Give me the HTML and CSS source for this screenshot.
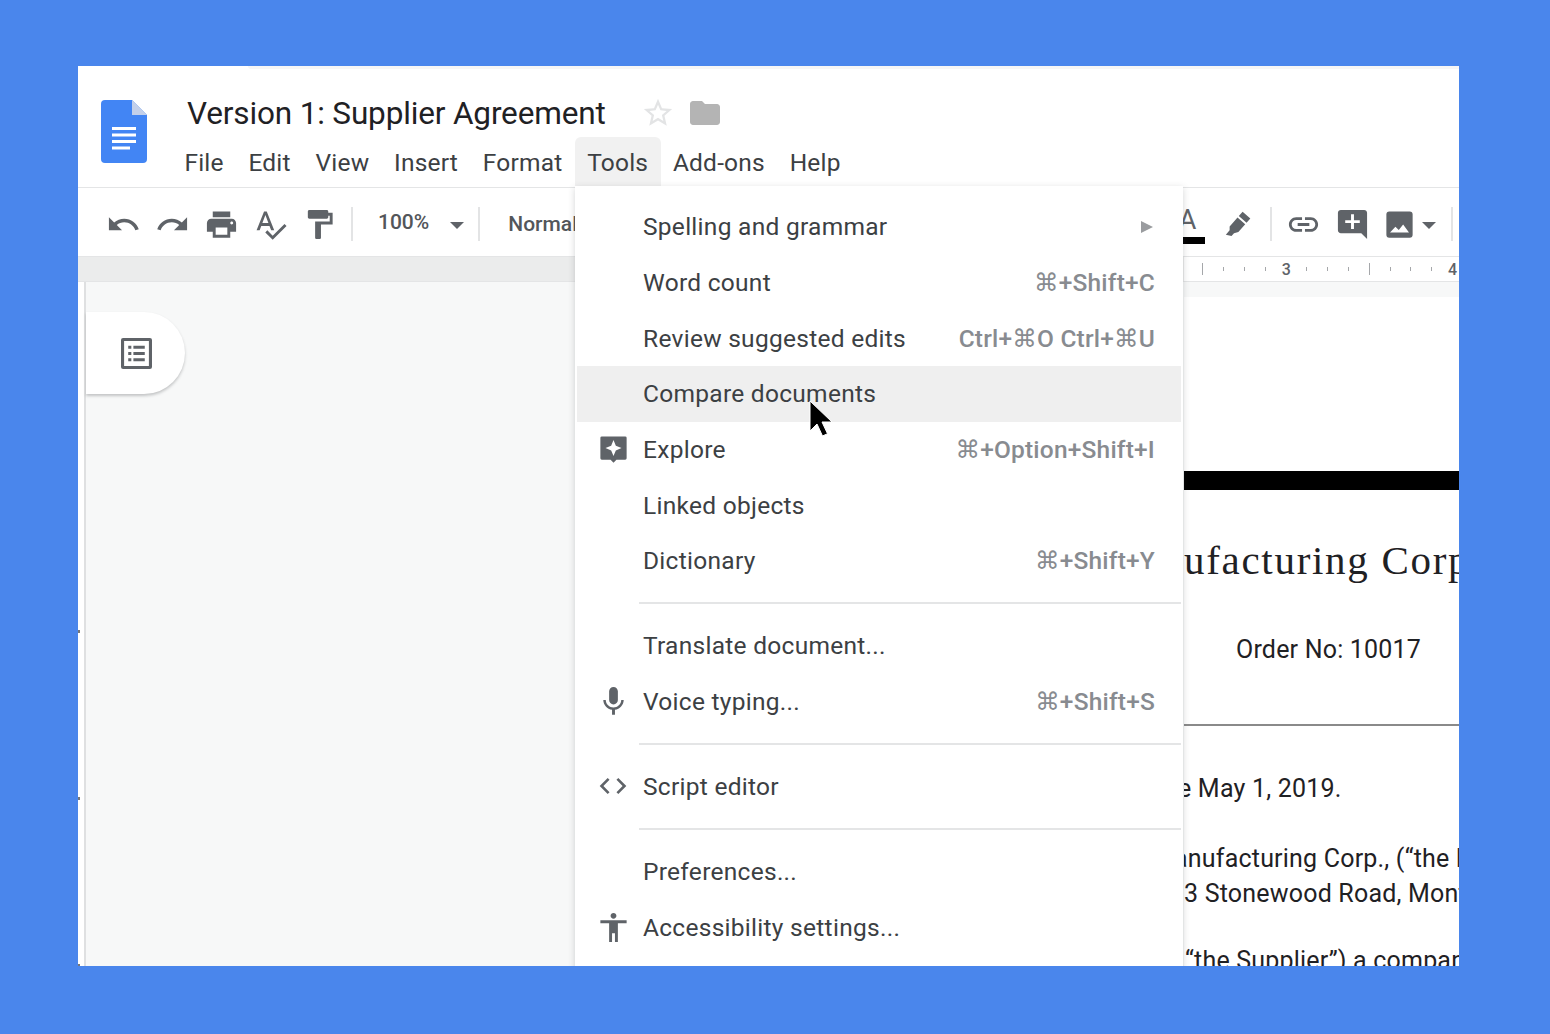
FILE: index.html
```html
<!DOCTYPE html>
<html lang="en">
<head>
    <meta charset="UTF-8">
    <title>Version 1: Supplier Agreement</title>
    <link rel="stylesheet" href="styles.css">
</head>
<body>
    <div class="window">
        <div class="top-strip"></div>
        <header class="doc-header">
            <svg class="doc-logo" viewBox="0 0 46 63">
                <path fill="#4285f4" d="M4 0h27l15 15v44a4 4 0 0 1-4 4H4a4 4 0 0 1-4-4V4a4 4 0 0 1 4-4z"/>
                <path fill="#c3d0ea" d="M31 0l15 15H31z"/>
                <path fill="#fff" d="M11 27h24v3H11zM11 33.500h24v3H11zM11 40h24v3H11zM11 46.500h18v3H11z"/>
            </svg>
            <div class="header-main">
                <div class="title-row">
                    <span class="doc-title">Version 1: Supplier Agreement</span>
                    <svg class="star-icon" viewBox="0 0 24 24"><path d="M22 9.240l-7.190-.62L12 2 9.190 8.630 2 9.240l5.460 4.730L5.820 21 12 17.270 18.180 21l-1.630-7.030L22 9.240zM12 15.400l-3.760 2.270 1-4.280-3.320-2.880 4.380-.38L12 6.100l1.710 4.040 4.380.38-3.320 2.880 1 4.280L12 15.400z"/></svg>
                    <svg class="folder-icon" viewBox="0 0 24 24"><path d="M10 4H4c-1.100 0-2 .9-2 2v12c0 1.100.9 2 2 2h16c1.100 0 2-.9 2-2V8c0-1.100-.9-2-2-2h-8l-2-2z"/></svg>
                </div>
                <nav class="menu-bar">
                    <span class="menu-item">File</span>
                    <span class="menu-item">Edit</span>
                    <span class="menu-item">View</span>
                    <span class="menu-item">Insert</span>
                    <span class="menu-item">Format</span>
                    <span class="menu-item active">Tools</span>
                    <span class="menu-item">Add-ons</span>
                    <span class="menu-item">Help</span>
                </nav>
            </div>
        </header>

        <div class="toolbar">
            <span class="tool"><svg viewBox="0 0 24 24"><path d="M12.500 8c-2.650 0-5.050.99-6.900 2.600L2 7v9h9l-3.620-3.620c1.390-1.160 3.160-1.880 5.120-1.880 3.540 0 6.550 2.310 7.600 5.500l2.370-.78C21.080 11.030 17.150 8 12.500 8z"/></svg></span>
            <span class="tool"><svg viewBox="0 0 24 24"><path d="M18.400 10.600C16.550 8.990 14.150 8 11.500 8c-4.650 0-8.580 3.030-9.960 7.220L3.900 16c1.050-3.190 4.050-5.500 7.600-5.500 1.950 0 3.730.72 5.120 1.880L13 16h9V7l-3.600 3.600z"/></svg></span>
            <span class="tool"><svg viewBox="0 0 24 24"><path d="M19 8H5c-1.660 0-3 1.340-3 3v6h4v4h12v-4h4v-6c0-1.660-1.340-3-3-3zm-3 11H8v-5h8v5zm3-7c-.55 0-1-.45-1-1s.45-1 1-1 1 .45 1 1-.45 1-1 1zm-1-9H6v4h12V3z"/></svg></span>
            <span class="tool"><svg viewBox="0 0 24 24"><path d="M12.450 16h2.090L9.430 3H7.570L2.460 16h2.090l1.120-3h5.640l1.140 3zm-6.020-5L8.500 5.480 10.570 11H6.430zm15.160.59l-8.090 8.090L9.830 16l-1.410 1.410 5.090 5.090L23 13l-1.410-1.410z"/></svg></span>
            <span class="tool"><svg viewBox="0 0 24 24"><path d="M18 4V3c0-.55-.45-1-1-1H5c-.55 0-1 .45-1 1v4c0 .55.45 1 1 1h12c.55 0 1-.45 1-1V6h1v4H9v11c0 .55.45 1 1 1h2c.55 0 1-.45 1-1v-9h8V4h-3z"/></svg></span>
            <span class="tool-sep"></span>
            <span class="zoom-value">100%</span>
            <span class="caret"></span>
            <span class="tool-sep"></span>
            <span class="style-value">Normal</span>

            <div class="toolbar-right">
                <span class="tool color-tool"><span class="color-letter">A</span><span class="color-bar"></span></span>
                <span class="tool marker-tool"><svg viewBox="0 0 24 24"><path d="M15.500 3.200l5.300 4.600-2.600 3-5.300-4.600zM12 7.200l5.300 4.600-4.700 5.400-3 .8-1.700 1.900L4 19l2.600-3 0-2.700z"/></svg></span>
                <span class="tool-sep"></span>
                <span class="tool"><svg viewBox="0 0 24 24"><path d="M3.900 12c0-1.710 1.390-3.100 3.100-3.100h4V7H7c-2.760 0-5 2.240-5 5s2.240 5 5 5h4v-1.900H7c-1.710 0-3.100-1.390-3.100-3.100zM8 13h8v-2H8v2zm9-6h-4v1.900h4c1.710 0 3.100 1.390 3.100 3.100s-1.390 3.100-3.100 3.100h-4V17h4c2.760 0 5-2.240 5-5s-2.240-5-5-5z"/></svg></span>
                <span class="tool"><svg viewBox="0 0 24 24"><path d="M21.990 4c0-1.100-.89-2-1.990-2H4c-1.100 0-2 .9-2 2v12c0 1.100.9 2 2 2h14l4 4-.01-18zM17 11h-4v4h-2v-4H7V9h4V5h2v4h4v2z"/></svg></span>
                <span class="tool image-tool"><svg viewBox="0 0 24 24"><path fill-rule="evenodd" d="M5 3h14a2 2 0 0 1 2 2v14a2 2 0 0 1-2 2H5a2 2 0 0 1-2-2V5a2 2 0 0 1 2-2zM5.500 17.500h13L14.500 12l-3 3.800-2.300-2.300z"/></svg></span>
                <span class="caret image-caret"></span>
                <span class="tool-sep last-sep"></span>
            </div>
        </div>

        <div class="ruler-row">
            <div class="ruler-fill"></div>
            <div class="ruler">
                <span class="tick major"></span><span class="tick"></span><span class="tick"></span><span class="tick"></span>
                <span class="ruler-num">3</span>
                <span class="tick"></span><span class="tick"></span><span class="tick"></span><span class="tick major"></span>
                <span class="tick"></span><span class="tick"></span><span class="tick"></span>
                <span class="ruler-num">4</span>
            </div>
        </div>

        <div class="canvas">
            <div class="side-ruler">
                <span class="side-tick"></span>
                <span class="side-tick"></span>
                <span class="side-tick"></span>
            </div>
            <div class="canvas-left">
                <div class="outline-tab">
                    <svg viewBox="0 0 30 30"><path fill-rule="evenodd" d="M2 0h26a2 2 0 0 1 2 2v26a2 2 0 0 1-2 2H2a2 2 0 0 1-2-2V2a2 2 0 0 1 2-2zm1 3v24h24V3z"/><path d="M7 7.500h3v3H7zM12 7.500h11v3H12zM7 13.500h3v3H7zM12 13.500h11v3H12zM7 19.500h3v3H7zM12 19.500h11v3H12z"/></svg>
                </div>
            </div>
            <div class="page">
                <div class="page-bar"></div>
                <h1 class="company">ufacturing Corp</h1>
                <p class="order-no">Order No: 10017</p>
                <div class="page-rule"></div>
                <p class="date-line">e May 1, 2019.</p>
                <p class="party">anufacturing Corp., (“the Buyer”)<br><span class="party-second">3 Stonewood Road, Montclair</span></p>
                <p class="supplier">“the Supplier”) a company</p>
            </div>
        </div>

        <div class="tools-menu">
            <div class="row"><span class="row-icon"></span><span class="row-label">Spelling and grammar</span><span class="submenu-arrow"></span></div>
            <div class="row"><span class="row-icon"></span><span class="row-label">Word count</span><span class="shortcut">⌘+Shift+C</span></div>
            <div class="row"><span class="row-icon"></span><span class="row-label">Review suggested edits</span><span class="shortcut">Ctrl+⌘O Ctrl+⌘U</span></div>
            <div class="row hover"><span class="row-icon"></span><span class="row-label">Compare documents</span></div>
            <div class="row">
                <span class="row-icon"><svg viewBox="0 0 24 24"><path fill-rule="evenodd" d="M4 3h16a1 1 0 0 1 1 1v14a1 1 0 0 1-1 1h-6l-2 2-2-2H4a1 1 0 0 1-1-1V4a1 1 0 0 1 1-1zm8 2.500l-1.600 3.900L6.500 11l3.900 1.600L12 16.500l1.600-3.900 3.900-1.600-3.900-1.600z"/></svg></span>
                <span class="row-label">Explore</span><span class="shortcut">⌘+Option+Shift+I</span>
            </div>
            <div class="row"><span class="row-icon"></span><span class="row-label">Linked objects</span></div>
            <div class="row"><span class="row-icon"></span><span class="row-label">Dictionary</span><span class="shortcut">⌘+Shift+Y</span></div>
            <div class="menu-sep"></div>
            <div class="row"><span class="row-icon"></span><span class="row-label">Translate document...</span></div>
            <div class="row">
                <span class="row-icon"><svg viewBox="0 0 24 24"><path d="M12 14c1.660 0 3-1.340 3-3V5c0-1.660-1.340-3-3-3S9 3.340 9 5v6c0 1.660 1.340 3 3 3zm5.300-3c0 3-2.540 5.100-5.300 5.100S6.700 14 6.700 11H5c0 3.410 2.720 6.230 6 6.720V21h2v-3.280c3.280-.48 6-3.300 6-6.720h-1.700z"/></svg></span>
                <span class="row-label">Voice typing...</span><span class="shortcut">⌘+Shift+S</span>
            </div>
            <div class="menu-sep"></div>
            <div class="row">
                <span class="row-icon code-icon"><svg viewBox="0 0 24 24"><path d="M9.400 16.600L4.800 12l4.600-4.600L8 6l-6 6 6 6 1.400-1.400zm5.200 0l4.600-4.600-4.600-4.600L16 6l6 6-6 6-1.400-1.400z"/></svg></span>
                <span class="row-label">Script editor</span>
            </div>
            <div class="menu-sep"></div>
            <div class="row"><span class="row-icon"></span><span class="row-label">Preferences...</span></div>
            <div class="row">
                <span class="row-icon"><svg viewBox="0 0 24 24"><path d="M12 2c1.100 0 2 .9 2 2s-.9 2-2 2-2-.9-2-2 .9-2 2-2zm9 7h-6v13h-2v-6h-2v6H9V9H3V7h18v2z"/></svg></span>
                <span class="row-label">Accessibility settings...</span>
            </div>
            <svg class="mouse-cursor" viewBox="0 0 24 38"><path d="M1 1v30l7-7 5.500 12 5-2.300L13 22h10z"/></svg>
        </div>
    </div>
</body>
</html>
```

FILE: styles.css
```css
body {
    margin: 0;
    background-color: #4a86ec;
    font-family: Roboto, "DejaVu Sans", sans-serif;
}

.window {
    position: relative;
    box-sizing: border-box;
    width: 1381px;
    height: 900px;
    margin: 66px 0 0 78px;
    background-color: #fff;
    overflow: hidden;
}

.top-strip {
    height: 3px;
    margin-left: 170px;
    background-color: #f6f6f6;
    border-bottom-left-radius: 3px;
}

/* header */
.doc-header {
    display: flex;
    height: 118px;
    border-bottom: 1px solid #e4e5e6;
}

.doc-logo {
    width: 46px;
    height: 63px;
    margin: 31px 0 0 23px;
}

.header-main {
    margin-left: 40px;
    padding-top: 26px;
}

.title-row {
    display: flex;
    align-items: center;
    height: 36px;
}

.doc-title {
    font-size: 31.500px;
    color: #1f2124;
    letter-spacing: -0.15px;
}

.star-icon {
    width: 34px;
    height: 34px;
    margin-left: 35px;
    fill: #e3e4e5;
}

.folder-icon {
    width: 36px;
    height: 36px;
    margin-left: 12px;
    fill: #b4b4b4;
}

.menu-bar {
    display: flex;
    margin: 6px 0 0 -15px;
}

.menu-item {
    height: 51px;
    line-height: 51px;
    padding: 0 12.400px;
    font-size: 24.500px;
    letter-spacing: 0.2px;
    color: #3c4043;
}

.menu-item.active {
    background-color: #f1f1f1;
    border-radius: 6px 6px 0 0;
}

/* toolbar */
.toolbar {
    display: flex;
    align-items: center;
    height: 64px;
    padding: 4px 0 0 21px;
    border-bottom: 1px solid #e4e5e6;
    overflow: hidden;
}

.tool {
    display: flex;
    flex-shrink: 0;
    justify-content: center;
    width: 49px;
}

.tool svg {
    width: 35px;
    height: 35px;
    fill: #5f6368;
}

.tool-sep {
    flex-shrink: 0;
    width: 2px;
    height: 34px;
    margin: 0 7px;
    background-color: #e3e4e5;
}

.zoom-value {
    margin: -4px 0 0 18px;
    font-size: 21px;
    font-weight: 500;
    color: #53565a;
}

.caret {
    flex-shrink: 0;
    width: 0;
    height: 0;
    margin: 2px 7px 0 21px;
    border-top: 7px solid #5f6368;
    border-left: 7px solid transparent;
    border-right: 7px solid transparent;
}

.style-value {
    margin-left: 21px;
    font-size: 21px;
    font-weight: 500;
    color: #53565a;
    white-space: nowrap;
}

.toolbar-right {
    display: flex;
    align-items: center;
    margin-left: auto;
}

.color-tool {
    flex-direction: column;
    align-items: center;
    height: 44px;
    margin-right: 1px;
}

.color-letter {
    height: 26px;
    font-size: 27px;
    line-height: 32px;
    color: #5f6368;
}

.color-bar {
    width: 35px;
    height: 7px;
    margin-top: 7px;
    background-color: #000;
}

.marker-tool {
    margin-right: 1px;
}

.image-tool {
    width: 44px;
}

.image-caret {
    margin: 2px 8px 0 1px;
}

.last-sep {
    margin-right: 6px;
}

/* ruler */
.ruler-row {
    display: flex;
    height: 24px;
    background-color: #fff;
}

.ruler-fill {
    flex: 1;
    background-color: #ebecec;
}

.ruler {
    display: flex;
    align-items: center;
    box-sizing: border-box;
    width: 275px;
    padding-left: 8.600px;
    overflow: hidden;
    background-color: #fff;
}

.tick,
.ruler-num {
    display: flex;
    flex: 0 0 20.800px;
    justify-content: center;
    font-size: 16px;
    font-weight: 500;
    color: #5f6368;
}

.tick::before {
    content: "";
    width: 1px;
    height: 4px;
    background-color: #a5a7aa;
}

.tick.major::before {
    height: 12px;
}

/* document area */
.canvas {
    display: flex;
    height: 684px;
    background-color: #f7f8f8;
    border-top: 1px solid #e4e5e6;
    overflow: hidden;
}

.side-ruler {
    display: flex;
    flex: 0 0 6px;
    flex-direction: column;
    gap: 164px;
    padding-top: 348px;
    background-color: #fff;
    border-right: 2px solid #dfe0e1;
}

.side-tick {
    flex-shrink: 0;
    width: 2px;
    height: 3px;
    background-color: #777;
}

.canvas-left {
    flex: 0 0 1098px;
}

.outline-tab {
    display: flex;
    align-items: center;
    justify-content: center;
    box-sizing: border-box;
    width: 99px;
    height: 82px;
    margin-top: 30px;
    padding-left: 2px;
    background-color: #fff;
    border-radius: 0 41px 41px 0;
    box-shadow: 0 2px 3px rgba(60, 64, 67, 0.28);
}

.outline-tab svg {
    width: 31px;
    height: 31px;
    fill: #5f6368;
}

/* page part that shows to the right of the menu */
.page {
    flex: 0 0 276px;
    margin-top: 15px;
    padding-top: 174px;
    background-color: #fff;
    color: #1f2124;
    letter-spacing: 0.2px;
    white-space: nowrap;
    overflow: hidden;
}

.page-bar {
    height: 19px;
    background-color: #000;
}

.company {
    height: 41px;
    margin: 50px 0 0 0;
    font-family: "Liberation Serif", serif;
    font-size: 41px;
    font-weight: 400;
    line-height: 41px;
    letter-spacing: 1.700px;
}

.order-no {
    height: 32px;
    margin: 53px 0 0 52px;
    font-size: 25px;
    line-height: 32px;
}

.page-rule {
    height: 2px;
    margin-top: 58px;
    background-color: #8a8a8a;
}

.date-line {
    height: 32px;
    margin: 47px 0 0 -6px;
    font-size: 25px;
    line-height: 32px;
}

.party {
    margin: 36px 0 0 -10px;
    font-size: 25px;
    line-height: 35px;
}

.party-second {
    margin-left: 10px;
}

.supplier {
    margin: 32px 0 0 1px;
    font-size: 25px;
    line-height: 35px;
}

/* tools dropdown */
.tools-menu {
    position: absolute;
    top: 120px;
    left: 497px;
    box-sizing: border-box;
    width: 608px;
    height: 800px;
    padding: 13px 2px 0;
    background-color: #fff;
    box-shadow: 0 2px 7px rgba(60, 64, 67, 0.22);
    border-radius: 0 0 4px 4px;
}

.row {
    display: flex;
    align-items: center;
    height: 55.670px;
    padding-right: 26px;
    font-size: 24.500px;
    letter-spacing: 0.28px;
    color: #3c4043;
}

.row.hover {
    background-color: #efefef;
}

.row-icon {
    display: flex;
    flex: 0 0 66px;
    box-sizing: border-box;
    padding-left: 18.500px;
}

.row-icon svg {
    flex-shrink: 0;
    width: 35px;
    height: 35px;
    fill: #5f6368;
}

.row-icon.code-icon {
    padding-left: 20px;
}

.row-icon.code-icon svg {
    width: 32px;
    height: 32px;
}

.row-label {
    flex: 1;
}

.shortcut {
    font-weight: 500;
    letter-spacing: 0.2px;
    color: #888b90;
}

.submenu-arrow {
    width: 0;
    height: 0;
    margin-right: 2px;
    border-left: 12px solid #9a9c9f;
    border-top: 6px solid transparent;
    border-bottom: 6px solid transparent;
}

.menu-sep {
    height: 2px;
    margin: 13.700px 0 13.700px 62px;
    background-color: #e4e5e6;
}

.mouse-cursor {
    position: absolute;
    top: 214px;
    left: 234px;
    width: 24px;
    height: 38px;
    fill: #000;
    stroke: #fff;
    stroke-width: 1px;
}
```
